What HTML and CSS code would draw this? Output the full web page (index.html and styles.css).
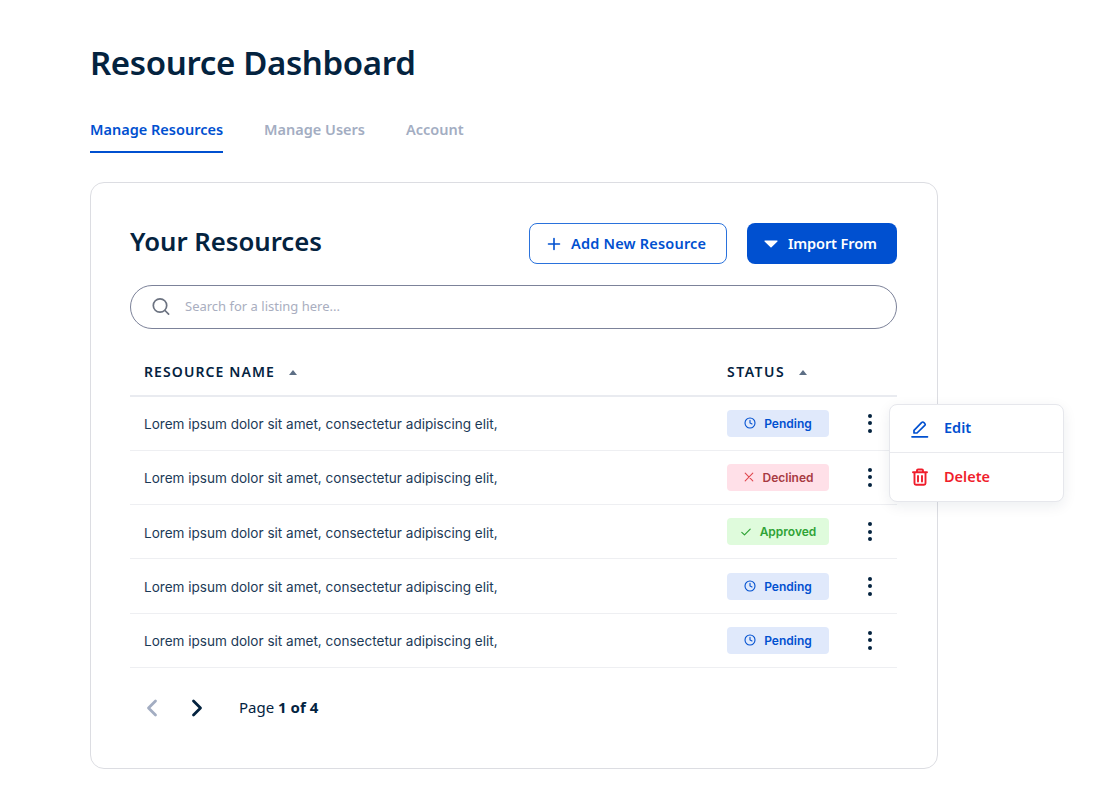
FILE: index.html
```html
<!DOCTYPE html>
<html lang="en">
<head>
    <meta charset="UTF-8">
    <meta name="viewport" content="width=device-width, initial-scale=1.0">
    <title>Resource Dashboard</title>
    <link rel="stylesheet" href="styles.css">
</head>
<body>
    <div class="page">
        <h1 class="page-title">Resource Dashboard</h1>

        <div class="tabs">
            <div class="tab active">Manage Resources</div>
            <div class="tab">Manage Users</div>
            <div class="tab">Account</div>
        </div>

        <div class="card">
            <div class="card-header">
                <h2 class="card-title">Your Resources</h2>
                <div class="actions">
                    <button class="btn btn-outline">
                        <svg width="14" height="14" viewBox="0 0 14 14" fill="none" stroke="currentColor" stroke-width="1.6" stroke-linecap="round"><path d="M7 1.5v11M1.5 7h11"/></svg>
                        <span>Add New Resource</span>
                    </button>
                    <button class="btn btn-primary">
                        <svg width="14" height="8" viewBox="0 0 14 8" fill="currentColor"><path d="M1 .5h12a.6.6 0 0 1 .45 1L7.5 7.2a.7.7 0 0 1-1 0L.55 1.5A.6.6 0 0 1 1 .5z"/></svg>
                        <span>Import From</span>
                    </button>
                </div>
            </div>

            <div class="search">
                <svg width="20" height="20" viewBox="0 0 20 20" fill="none" stroke="#6b7280" stroke-width="1.7" stroke-linecap="round"><circle cx="9" cy="8.5" r="6.7"/><path d="M14 13.5l3.6 3.6"/></svg>
                <span class="search-placeholder">Search for a listing here...</span>
            </div>

            <div class="table">
                <div class="row row-head">
                    <div class="cell-name">RESOURCE NAME <span class="sort"></span></div>
                    <div class="cell-status">STATUS <span class="sort"></span></div>
                </div>

                <div class="row">
                    <div class="cell-name">Lorem ipsum dolor sit amet, consectetur adipiscing elit,</div>
                    <div class="cell-status">
                        <span class="badge badge-pending">
                            <svg width="12" height="12" viewBox="0 0 12 12" fill="none" stroke="currentColor" stroke-width="1.1" stroke-linecap="round"><circle cx="6" cy="6" r="5"/><path d="M6 3.2V6l2 1"/></svg>
                            Pending
                        </span>
                    </div>
                    <div class="cell-more"><span class="dots"><i></i><i></i><i></i></span></div>
                </div>
                <div class="row">
                    <div class="cell-name">Lorem ipsum dolor sit amet, consectetur adipiscing elit,</div>
                    <div class="cell-status">
                        <span class="badge badge-declined">
                            <svg width="12" height="12" viewBox="0 0 12 12" fill="none" stroke="#e0484f" stroke-width="1.1" stroke-linecap="round"><path d="M2.2 2.2l7.6 7.6M9.800 2.200l-7.6 7.6"/></svg>
                            Declined
                        </span>
                    </div>
                    <div class="cell-more"><span class="dots"><i></i><i></i><i></i></span></div>
                </div>
                <div class="row">
                    <div class="cell-name">Lorem ipsum dolor sit amet, consectetur adipiscing elit,</div>
                    <div class="cell-status">
                        <span class="badge badge-approved">
                            <svg width="12" height="12" viewBox="0 0 12 12" fill="none" stroke="currentColor" stroke-width="1.2" stroke-linecap="round" stroke-linejoin="round"><path d="M1.800 6.400l2.700 2.500 5.700-5.800"/></svg>
                            Approved
                        </span>
                    </div>
                    <div class="cell-more"><span class="dots"><i></i><i></i><i></i></span></div>
                </div>
                <div class="row">
                    <div class="cell-name">Lorem ipsum dolor sit amet, consectetur adipiscing elit,</div>
                    <div class="cell-status">
                        <span class="badge badge-pending">
                            <svg width="12" height="12" viewBox="0 0 12 12" fill="none" stroke="currentColor" stroke-width="1.1" stroke-linecap="round"><circle cx="6" cy="6" r="5"/><path d="M6 3.2V6l2 1"/></svg>
                            Pending
                        </span>
                    </div>
                    <div class="cell-more"><span class="dots"><i></i><i></i><i></i></span></div>
                </div>
                <div class="row">
                    <div class="cell-name">Lorem ipsum dolor sit amet, consectetur adipiscing elit,</div>
                    <div class="cell-status">
                        <span class="badge badge-pending">
                            <svg width="12" height="12" viewBox="0 0 12 12" fill="none" stroke="currentColor" stroke-width="1.1" stroke-linecap="round"><circle cx="6" cy="6" r="5"/><path d="M6 3.2V6l2 1"/></svg>
                            Pending
                        </span>
                    </div>
                    <div class="cell-more"><span class="dots"><i></i><i></i><i></i></span></div>
                </div>

                <div class="menu">
                    <div class="menu-item menu-edit">
                        <svg width="18" height="18" viewBox="0 0 18 18" fill="none" stroke="currentColor" stroke-width="1.7" stroke-linecap="round" stroke-linejoin="round"><path d="M3 13V10.300L10.800 2.400a1.300 1.300 0 0 1 1.900 0l1.100 1.100a1.300 1.300 0 0 1 0 1.900L6 13z"/><path d="M1 16.800h15.500"/></svg>
                        <span>Edit</span>
                    </div>
                    <div class="menu-item menu-delete">
                        <svg width="18" height="18" viewBox="0 0 18 18" fill="none" stroke="currentColor" stroke-width="1.9" stroke-linecap="round" stroke-linejoin="round"><path d="M2 4.200h14M6 4V2.500a1 1 0 0 1 1-1h4a1 1 0 0 1 1 1V4M3.500 4.500v10.700a1.500 1.500 0 0 0 1.500 1.500h8a1.500 1.500 0 0 0 1.500-1.500V4.500M7 8v5.500M11 8v5.500"/></svg>
                        <span>Delete</span>
                    </div>
                </div>
            </div>

            <div class="pagination">
                <svg class="page-prev" width="12" height="18" viewBox="0 0 12 18" fill="none" stroke="#a3adc2" stroke-width="2.8" stroke-linecap="round" stroke-linejoin="round"><path d="M9.500 2L2.500 9l7 7"/></svg>
                <svg class="page-next" width="12" height="18" viewBox="0 0 12 18" fill="none" stroke="#04233f" stroke-width="2.8" stroke-linecap="round" stroke-linejoin="round"><path d="M2.500 2l7 7-7 7"/></svg>
                <div class="page-label">Page <b>1 of 4</b></div>
            </div>
        </div>
    </div>
</body>
</html>
```

FILE: styles.css
```css
* {
    margin: 0;
    padding: 0;
    box-sizing: border-box;
}

body {
    font-family: 'Noto Sans', 'Open Sans', sans-serif;
    background: #ffffff;
    color: #04233f;
}

.page {
    width: 938px;
    padding: 41px 0 0 90px;
}

.page-title {
    font-size: 33px;
    line-height: 44px;
    font-weight: 600;
    letter-spacing: -0.35px;
    color: #04233f;
}

.tabs {
    display: flex;
    gap: 41px;
    margin-top: 32px;
}

.tab {
    font-size: 14.5px;
    line-height: 20px;
    font-weight: 600;
    color: #a3adc2;
    padding: 2px 0 12px;
}

.tab.active {
    color: #0050d0;
    border-bottom: 2px solid #0050d0;
}

.card {
    margin-top: 29px;
    height: 587px;
    border: 1.5px solid #dcdde2;
    border-radius: 14px;
    padding: 40px 40px 0 39px;
}

.card-header {
    display: flex;
    justify-content: space-between;
    align-items: center;
}

.card-title {
    font-size: 25.7px;
    font-weight: 600;
    line-height: 37px;
    padding-bottom: 4px;
    color: #04233f;
}

.actions {
    display: flex;
    gap: 20px;
}

.btn {
    display: flex;
    align-items: center;
    gap: 10px;
    height: 41px;
    border-radius: 8px;
    font-family: inherit;
    font-size: 14.5px;
    font-weight: 600;
}

.btn span {
    line-height: 18px;
    padding-bottom: 2px;
}

.btn-outline {
    width: 198px;
    padding-left: 17px;
    background: #ffffff;
    color: #0050d0;
    border: 1px solid #2a72dc;
    letter-spacing: 0.2px;
}

.btn-primary {
    width: 150px;
    padding-left: 17px;
    background: #0050d0;
    color: #ffffff;
    border: none;
    letter-spacing: -0.1px;
}

.search {
    display: flex;
    align-items: center;
    gap: 14px;
    height: 44px;
    margin-top: 21px;
    padding-left: 20px;
    border: 1px solid #7c8299;
    border-radius: 22px;
}

.search-placeholder {
    font-size: 13px;
    color: #a9aec0;
    padding-bottom: 2px;
}

.table {
    position: relative;
    margin-top: 20px;
}

.row {
    display: flex;
    align-items: center;
    height: 54.3px;
    border-bottom: 1.5px solid #eeeff2;
    font-family: 'Inter', sans-serif;
    font-size: 13.55px;
    color: #1c3a57;
}

.row-head {
    height: 47.5px;
    border-bottom: 2px solid #e9ebf0;
    font-family: 'Noto Sans', sans-serif;
    font-size: 14px;
    font-weight: 600;
    letter-spacing: 1.1px;
    color: #04233f;
}

.row-head .cell-status {
    letter-spacing: 1.5px;
}

.cell-name {
    width: 597px;
    padding: 2px 0 0 14px;
}

.row-head .cell-name {
    padding-top: 0;
}

.cell-status {
    width: 141px;
}

.cell-more {
    display: flex;
}

.sort {
    display: inline-block;
    width: 0;
    height: 0;
    margin: 0 0 2px 9px;
    border-left: 4.500px solid transparent;
    border-right: 4.500px solid transparent;
    border-bottom: 5px solid #5d6f85;
}

.badge {
    display: flex;
    align-items: center;
    justify-content: center;
    gap: 8px;
    width: 102px;
    height: 27px;
    border-radius: 4px;
    font-size: 12px;
    font-weight: 600;
}

.badge-pending {
    background: #e0e9fb;
    color: #0050d0;
}

.badge-declined {
    background: #ffe0e8;
    color: #a83a42;
}

.badge-approved {
    background: #dffbdc;
    color: #2fa336;
}

.dots {
    display: flex;
    flex-direction: column;
    gap: 3.500px;
}

.dots i {
    display: block;
    width: 4px;
    height: 4px;
    border-radius: 50%;
    background: #04233f;
}

.menu {
    position: absolute;
    top: 55px;
    left: 759px;
    width: 175px;
    background: #ffffff;
    border: 1px solid #e6e7ec;
    border-radius: 8px;
    box-shadow: 0 4px 14px rgba(4, 35, 63, 0.08);
}

.menu-item {
    display: flex;
    align-items: center;
    gap: 15px;
    height: 48px;
    padding-left: 21px;
    font-size: 14.5px;
    font-weight: 600;
    font-family: 'Noto Sans', sans-serif;
}

.menu-edit {
    color: #0050d0;
    border-bottom: 1px solid #e9eaee;
}

.menu-edit span {
    padding-bottom: 3px;
}

.menu-delete {
    color: #f01e2c;
}

.menu-delete span {
    padding-bottom: 2px;
}

.pagination {
    display: flex;
    align-items: center;
    height: 80px;
    padding-left: 16px;
}

.page-next {
    margin-left: 33px;
}

.page-label {
    margin-left: 36px;
    font-size: 15px;
    padding-bottom: 2px;
}
```
